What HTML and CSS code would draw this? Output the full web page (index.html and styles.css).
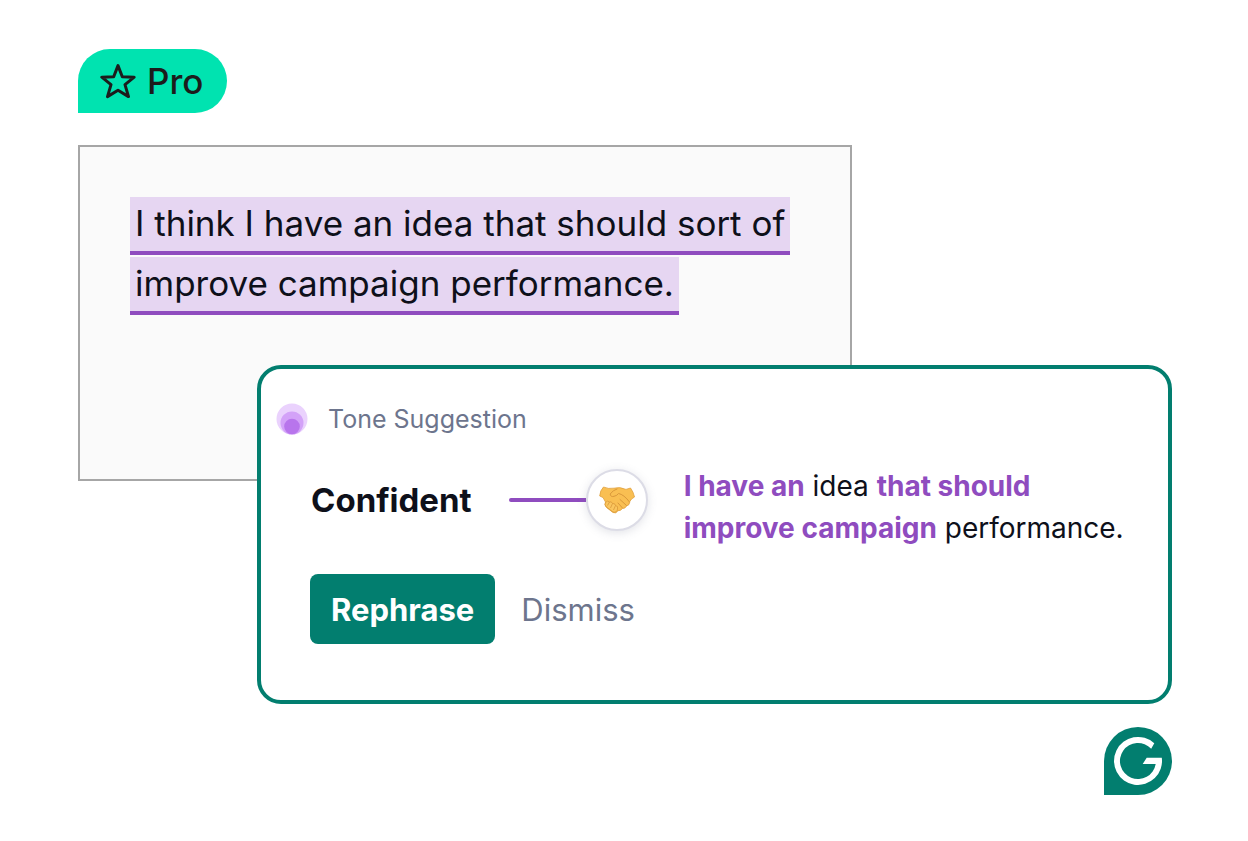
FILE: index.html
```html
<!DOCTYPE html>
<html lang="en">
<head>
  <meta charset="UTF-8" />
  <meta name="viewport" content="width=device-width, initial-scale=1.0"/>
  <title>Tone Suggestion | Pro</title>
  <link rel="stylesheet" href="styles.css">
</head>
<body>

  <main class="page">
    <div class="badge">
      <svg class="star" viewBox="0 0 36 36" aria-hidden="true">
        <path d="M18 2.6 L22.3 13.8 L34.2 14.2 L25 21.6 L28.5 33.6 L18 27.2 L7.5 33.6 L11 21.6 L1.8 14.2 L13.7 13.8 Z"/>
      </svg>
      Pro
    </div>

    <!-- Document -->
    <section class="document">
      <p><mark>I think I have an idea that should sort of<br>improve campaign performance.</mark></p>
    </section>

    <!-- Suggestion card -->
    <section class="card">
      <header class="card-header">
        <svg class="tone-icon" viewBox="0 0 32 32" aria-hidden="true">
          <circle cx="16" cy="16" r="15.5" fill="#ead2fd"/>
          <circle cx="16" cy="20" r="11.5" fill="#d3a2f8"/>
          <circle cx="16" cy="23.5" r="7.8" fill="#b875ec"/>
        </svg>
        <span>Tone Suggestion</span>
      </header>

      <div class="card-body">
        <div class="tone">
          <h2>Confident</h2>
          <div class="connector"></div>
          <div class="tone-face">
            <svg viewBox="0 0 36 28" aria-hidden="true">
              <path d="M4.5 1 Q9 3.2 15 2.2 Q21 .6 27 3.4 L31.500 2 Q34.500 6 35.500 11 Q32 12.500 30.500 16 Q31 19 27.500 20 Q26.500 22.500 23.500 22.500 Q21.500 25 19 24.700 Q17 28 14 26.500 L7.500 21.500 Q5 19 6.500 16 L4 11.500 L.7 10 Q1 4.500 4.500 1 Z" fill="#f9bf52" stroke="#e0a03c" stroke-width=".8" stroke-linejoin="round"/>
              <path d="M6.500 16.500 Q8.500 14 10.500 16 Q12.500 15 13.500 17.500 Q16 17 16.500 19.500 Q19.500 20 18.500 23 Q18 27 14 26 L7.500 21 Q5 19 6.500 16.500 Z" fill="#fac65f" stroke="#d9983a" stroke-width=".8"/>
              <path d="M10.500 16 L8.500 19.500 M13.500 17.500 L11.500 22 M16.500 19.500 L14.500 24" fill="none" stroke="#d9983a" stroke-width=".8"/>
              <path d="M18 3 Q14 4 11.200 8 Q11.500 11.300 15 10.300 Q18 9.800 19.500 7.500 Q25 8.500 30.500 16 M21 13.500 L27.500 19.500 M19 17 L23.500 22" fill="none" stroke="#d9983a" stroke-width="1" stroke-linecap="round"/>
            </svg>
          </div>
        </div>
        <p class="rewrite"><strong>I have an</strong> idea <strong>that should<br>improve campaign</strong> performance.</p>
      </div>

      <div class="actions">
        <button type="button" class="rephrase">Rephrase</button>
        <button type="button" class="dismiss">Dismiss</button>
      </div>
    </section>

    <svg class="logo" viewBox="0 0 68 68" role="img" aria-label="Grammarly">
      <path d="M0 68 V34 A34 34 0 1 1 34 68 Z" fill="#027e6f"/>
      <path d="M50.3 16.3 A24 24 0 1 0 57.8 30.7 H42.7 L38.7 37 H51.7 A18 18 0 1 1 47.2 21.8 Z" fill="#fff"/>
    </svg>
  </main>

</body>
</html>
```

FILE: styles.css
```css
* {
  margin: 0;
  padding: 0;
  box-sizing: border-box;
  font-family: "Inter", sans-serif;
}

body {
  background-color: #ffffff;
  color: #0e101a;
}

.page {
  display: flex;
  flex-direction: column;
  padding: 49px 76px 46px 78px;
}

.badge {
  display: flex;
  align-items: center;
  gap: 11px;
  align-self: flex-start;
  height: 64px;
  padding: 0 24px 0 22px;
  border-radius: 32px 32px 32px 0;
  background-color: #00e3b0;
  color: #1c1c1c;
  font-size: 35px;
  font-weight: 500;
}

.star {
  width: 36px;
  height: 36px;
  fill: none;
  stroke: #1c1c1c;
  stroke-width: 3;
  stroke-linejoin: round;
}

.document {
  width: 774px;
  max-width: 100%;
  min-height: 336px;
  margin-top: 32px;
  padding: 46px 50px;
  background-color: #fafafa;
  border: 2px solid #a6a6a6;
}

.document p {
  font-size: 35px;
  line-height: 60px;
}

.document mark {
  padding: 5px 5px 7px;
  background-color: #e6d6f2;
  border-bottom: 4px solid #8f4cbf;
  color: inherit;
  -webkit-box-decoration-break: clone;
  box-decoration-break: clone;
}

.card {
  position: relative;
  margin: -116px 0 0 179px;
  padding: 34px 15px 56px;
  background-color: #ffffff;
  border: 4px solid #027e6f;
  border-radius: 24px;
}

.card-header {
  display: flex;
  align-items: center;
  gap: 20px;
  height: 32px;
  color: #6d758d;
  font-size: 25px;
}

.tone-icon {
  width: 32px;
  height: 32px;
}

.card-body {
  display: flex;
  align-items: flex-start;
  gap: 36px;
  margin-top: 30px;
  padding-left: 35px;
}

.tone {
  display: flex;
  align-items: center;
  height: 70px;
}

.tone h2 {
  font-size: 33px;
  font-weight: 700;
}

.connector {
  width: 77px;
  height: 4px;
  margin-left: 37px;
  border-radius: 2px 0 0 2px;
  background-color: #8f4cbf;
}

.tone-face {
  display: flex;
  align-items: center;
  justify-content: center;
  width: 62px;
  height: 62px;
  border: 2px solid #dcdce6;
  border-radius: 50%;
  background-color: #ffffff;
  box-shadow: 0 2px 10px rgba(109, 117, 141, 0.2);
}

.tone-face svg {
  width: 36px;
  height: 28px;
}

.rewrite {
  font-size: 28px;
  line-height: 42px;
}

.rewrite strong {
  color: #8f4cbf;
  font-weight: 700;
}

.actions {
  display: flex;
  align-items: center;
  gap: 26px;
  margin-top: 25px;
  padding-left: 34px;
}

.actions button {
  height: 70px;
  border: none;
  background: none;
  font-size: 31px;
  cursor: pointer;
}

.actions .rephrase {
  padding: 0 21px;
  border-radius: 8px;
  background-color: #027e6f;
  color: #ffffff;
  font-weight: 700;
}

.actions .dismiss {
  color: #6d758d;
}

.logo {
  align-self: flex-end;
  width: 68px;
  height: 68px;
  margin-top: 23px;
}
```
